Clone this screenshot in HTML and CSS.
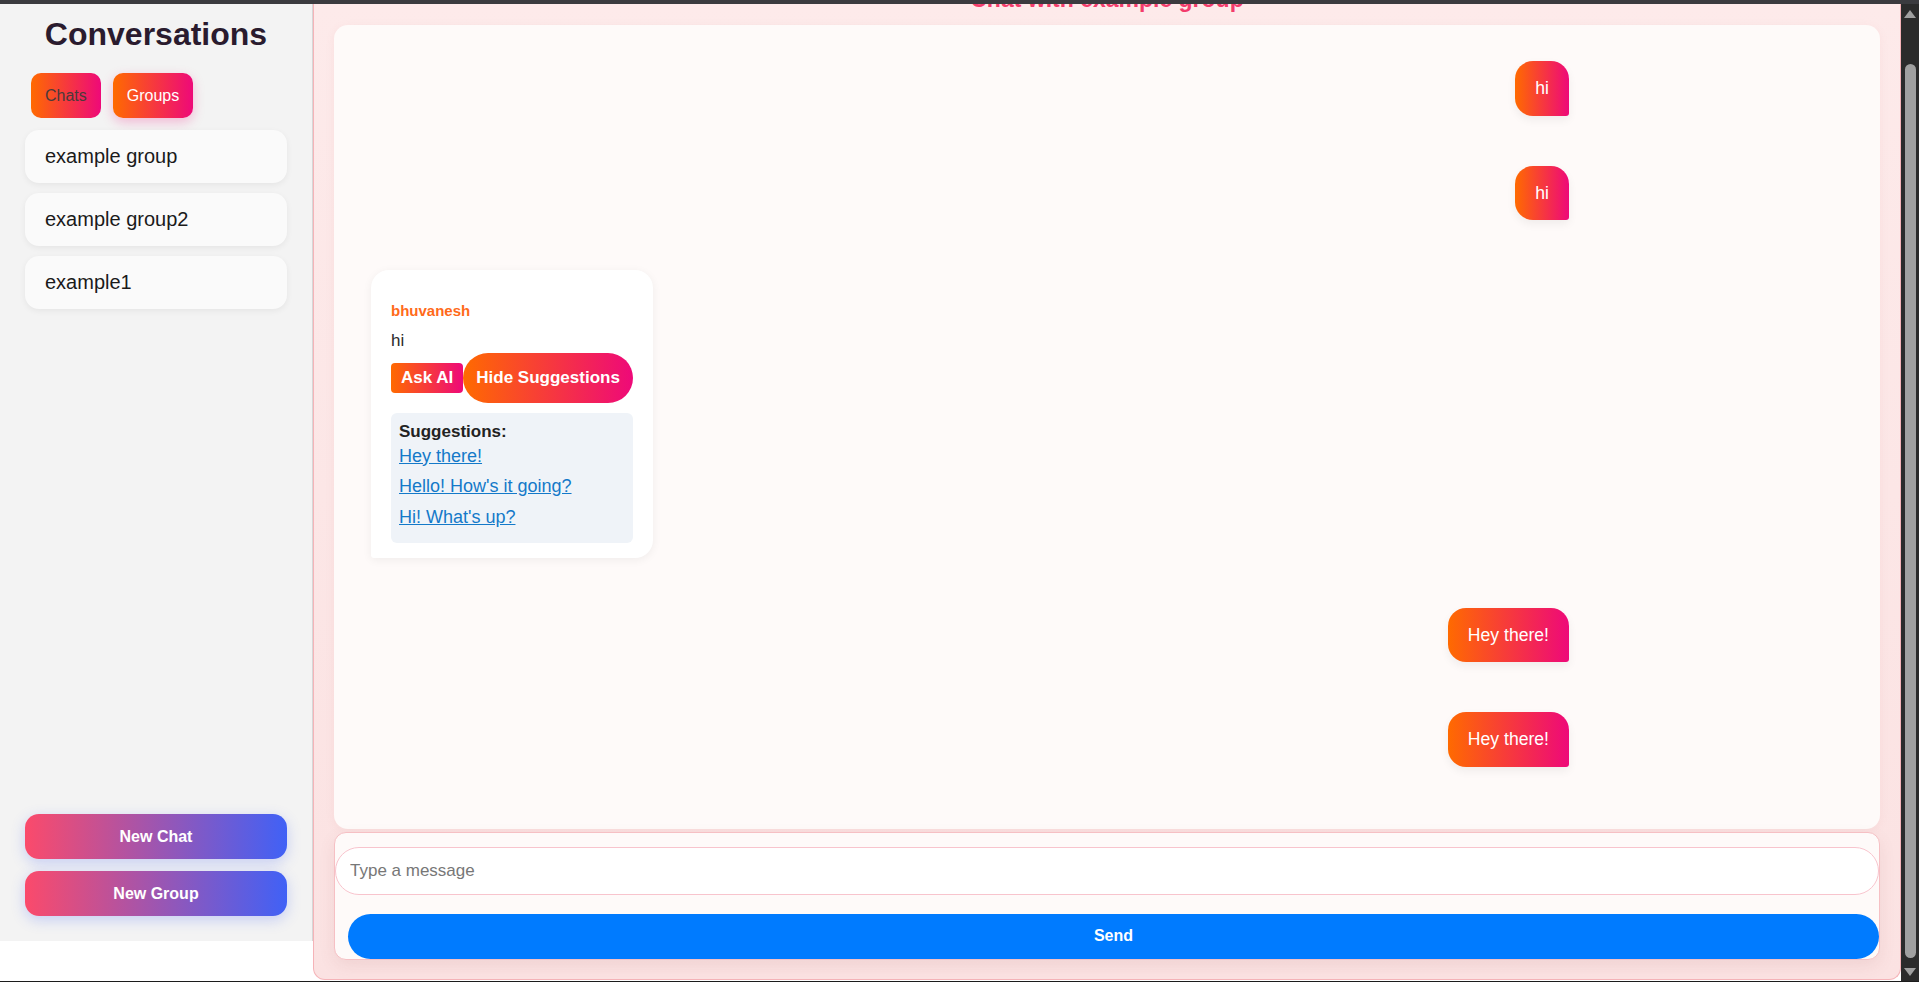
FILE: index.html
```html
<!DOCTYPE html>
<html lang="en">
<head>
<meta charset="utf-8">
<title>Chat</title>
<link rel="stylesheet" href="styles.css">
</head>
<body>
<div class="topbar"></div>
<div class="frame">
  <div class="app">
    <aside class="sidebar">
      <h2 class="side-title">Conversations</h2>
      <div class="tabs">
        <button class="tab">Chats</button>
        <button class="tab active">Groups</button>
      </div>
      <ul class="conv-list">
        <li class="conv">example group</li>
        <li class="conv">example group2</li>
        <li class="conv">example1</li>
      </ul>
      <div class="side-actions">
        <button class="action">New Chat</button>
        <button class="action">New Group</button>
      </div>
    </aside>
    <main class="panel">
      <h2 class="chat-title">Chat with example group</h2>
      <section class="messages">
        <div class="bubble sent">hi</div>
        <div class="bubble sent">hi</div>
        <div class="card">
          <div class="sender">bhuvanesh</div>
          <div class="card-text">hi</div>
          <div class="card-actions">
            <button class="ask">Ask AI</button>
            <button class="hide">Hide Suggestions</button>
          </div>
          <div class="suggest">
            <strong class="suggest-title">Suggestions:</strong>
            <div class="suggest-item"><a href="#">Hey there!</a></div>
            <div class="suggest-item"><a href="#">Hello! How's it going?</a></div>
            <div class="suggest-item"><a href="#">Hi! What's up?</a></div>
          </div>
        </div>
        <div class="bubble sent">Hey there!</div>
        <div class="bubble sent">Hey there!</div>
      </section>
      <form class="composer">
        <input class="msg-input" type="text" placeholder="Type a message">
        <button class="send" type="button">Send</button>
      </form>
    </main>
  </div>
  <div class="scrollbar">
    <div class="arrow up"></div>
    <div class="thumb"></div>
    <div class="arrow down"></div>
  </div>
</div>
<div class="bottombar"></div>
</body>
</html>
```

FILE: styles.css
```css
* { box-sizing: border-box; }
html, body { margin: 0; padding: 0; }
body {
  width: 1919px;
  height: 982px;
  overflow: hidden;
  background: #ffffff;
  font-family: "Liberation Sans", Arial, sans-serif;
  color: #222;
}
.topbar { height: 4px; background: #3b3b3f; }
.bottombar { height: 1px; background: #1c1c1c; }
.frame {
  display: flex;
  height: 977px;
}
.app {
  flex: 1;
  display: flex;
  align-items: flex-start;
  height: 977px;
  overflow: hidden;
}

/* Sidebar */
.sidebar {
  width: 313px;
  height: 937px;
  background: #f3f3f3;
  border-right: 1px solid #d6d6d6;
  display: flex;
  flex-direction: column;
  padding: 0 25px 25px 25px;
}
.side-title {
  margin: 12px 0 0 0;
  font-size: 32px;
  line-height: 37px;
  font-weight: bold;
  text-align: center;
  color: #2a1b2e;
}
.tabs {
  display: flex;
  gap: 12px;
  margin: 20px 0 0 6px;
}
.tab {
  font-family: inherit;
  font-size: 16px;
  line-height: 19px;
  padding: 13px 14px;
  border: none;
  border-radius: 10px;
  background: linear-gradient(90deg, #ff6a00, #ee0979);
  color: #4a3a3a;
}
.tab.active {
  color: #ffffff;
  box-shadow: 0 4px 12px rgba(238, 9, 121, 0.25);
}
.conv-list {
  list-style: none;
  margin: 12px 0 0 0;
  padding: 0;
  display: flex;
  flex-direction: column;
  gap: 10px;
}
.conv {
  background: #fafafa;
  border-radius: 14px;
  padding: 15px 20px;
  font-size: 20px;
  line-height: 23px;
  color: #1a1a1a;
  box-shadow: 0 2px 6px rgba(0, 0, 0, 0.06);
}
.side-actions {
  margin-top: auto;
  display: flex;
  flex-direction: column;
  gap: 12px;
}
.action {
  font-family: inherit;
  height: 45px;
  border: none;
  border-radius: 14px;
  background: linear-gradient(90deg, #fb4a6b, #4061f6);
  color: #ffffff;
  font-weight: bold;
  font-size: 16px;
  box-shadow: 0 4px 14px rgba(64, 97, 246, 0.25);
}

/* Chat panel */
.panel {
  flex: 1;
  height: 976px;
  display: flex;
  flex-direction: column;
  background: linear-gradient(180deg, #fdeaea, #fbe2e2);
  border: 1px solid #f5b3b8;
  border-top: none;
  border-radius: 0 0 12px 12px;
  padding: 0 20px 19px 20px;
}
.chat-title {
  margin: -18px 0 12.5px 0;
  font-size: 23px;
  line-height: 26.5px;
  font-weight: bold;
  text-align: center;
  color: #f33c6c;
}
.messages {
  flex: 1;
  background: #fefaf9;
  border-radius: 14px;
  box-shadow: 0 2px 10px rgba(200, 120, 120, 0.08);
  padding: 36px 311px 0 37px;
  display: flex;
  flex-direction: column;
  gap: 50px;
  margin-bottom: 3px;
}
.bubble {
  align-self: flex-end;
  padding: 17px 20px;
  font-size: 17.6px;
  line-height: 20.5px;
  color: #ffffff;
  background: linear-gradient(90deg, #ff6a00, #ee0979);
  border-radius: 18px 18px 3px 18px;
  box-shadow: 0 4px 10px rgba(0, 0, 0, 0.06);
}
.card {
  align-self: flex-start;
  width: 282px;
  background: #ffffff;
  border-radius: 18px 18px 18px 3px;
  box-shadow: 0 2px 10px rgba(0, 0, 0, 0.06);
  padding: 32px 20px 15px 20px;
}
.sender {
  font-size: 15px;
  line-height: 17px;
  font-weight: bold;
  color: #ff6a1a;
}
.card-text {
  margin-top: 12px;
  font-size: 17px;
  line-height: 19.5px;
  color: #2a2a2a;
}
.card-actions {
  display: flex;
  align-items: center;
  margin-top: 2px;
  white-space: nowrap;
}
.ask {
  flex: none;
  font-family: inherit;
  font-size: 17px;
  line-height: 18px;
  font-weight: bold;
  color: #ffffff;
  border: none;
  border-radius: 4px;
  padding: 6px 10px;
  background: linear-gradient(90deg, #ff6a00, #ee0979);
}
.hide {
  flex: none;
  font-family: inherit;
  font-size: 17px;
  line-height: 20px;
  font-weight: bold;
  color: #ffffff;
  border: none;
  border-radius: 25px;
  padding: 15px 13px;
  background: linear-gradient(90deg, #ff6a00, #ee0979);
}
.suggest {
  margin-top: 10px;
  background: #eff3f8;
  border-radius: 6px;
  padding: 10px 8px 10.5px 8px;
}
.suggest-title {
  display: block;
  font-size: 17px;
  line-height: 18px;
  color: #222;
}
.suggest-item {
  padding: 5px 0;
  font-size: 18px;
  line-height: 20.5px;
}
.suggest-item a {
  color: #1479c9;
  text-decoration: underline;
}

/* Composer */
.composer {
  margin: 0;
  height: 128px;
  background: #fefaf9;
  border: 1px solid #f6c0c4;
  border-radius: 12px;
  box-shadow: 0 6px 16px rgba(150, 80, 80, 0.1);
  display: flex;
  flex-direction: column;
  overflow: hidden;
}
.msg-input {
  margin-top: 14px;
  height: 49px;
  width: 100%;
  border: 1px solid #f8c4cd;
  border-radius: 24px;
  background: #ffffff;
  padding: 0 14px;
  font-family: inherit;
  font-size: 17px;
  color: #333;
  outline: none;
}
.msg-input::placeholder { color: #777; }
.send {
  margin: 19px 0 0 13px;
  height: 46px;
  width: calc(100% - 13px);
  border: none;
  border-radius: 23px;
  background: #007bff;
  color: #ffffff;
  font-family: inherit;
  font-weight: bold;
  font-size: 16px;
}

/* Scrollbar */
.scrollbar {
  width: 18px;
  background: #2b2b2b;
  display: flex;
  flex-direction: column;
  align-items: center;
  padding: 6px 0 5px 0;
}
.arrow {
  width: 0;
  height: 0;
  border-left: 6px solid transparent;
  border-right: 6px solid transparent;
}
.arrow.up { border-bottom: 8px solid #a0a0a0; }
.arrow.down { border-top: 8px solid #a0a0a0; }
.thumb {
  flex: 1;
  width: 11px;
  margin: 46px 0 10px 0;
  background: #a0a0a0;
  border-radius: 6px;
}
```
